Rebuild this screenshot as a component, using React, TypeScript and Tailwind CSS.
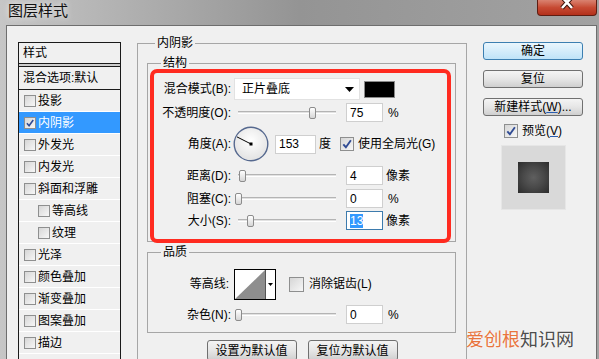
import React from 'react';

type BoxProps = { checked?: boolean; className?: string };

function CheckBox({ checked = false, className = 'h-[12px] w-[12px]' }: BoxProps) {
  return (
    <span
      className={`flex shrink-0 items-center justify-center border border-[#8e8f8f] bg-gradient-to-br from-[#d6d6d6] to-[#f7f7f7] ${className}`}
    >
      {checked && (
        <svg viewBox="0 0 12 12" className="h-full w-full">
          <path d="M2.3 6.3 L4.9 9.2 L9.9 2.3" fill="none" stroke="#304b94" strokeWidth="1.9" />
        </svg>
      )}
    </span>
  );
}

function Slider({ pos }: { pos: number }) {
  return (
    <div className="relative h-[14px] w-[106px] shrink-0">
      <div className="absolute left-[4px] right-[4px] top-[5px] h-[3px] border-t border-b border-t-[#b4b4b4] border-b-white bg-[#e2e2e2]" />
      <div
        className="absolute top-[1px] h-[12px] w-[7px] rounded-[2px] border border-[#8c8c8c] bg-gradient-to-b from-white to-[#d6d6d6]"
        style={{ left: pos }}
      />
    </div>
  );
}

function NumBox({ value, focused = false, className = 'w-[37px]' }: { value: string; focused?: boolean; className?: string }) {
  return (
    <div
      className={`flex h-[19px] shrink-0 items-center border bg-white pl-[3px] leading-[14px] ${className} ${
        focused ? 'border-[#3d7bad]' : 'border-[#cfcfcf]'
      }`}
    >
      {focused ? <span className="bg-[#3399ff] text-white">{value}</span> : value}
    </div>
  );
}

function Button({ children, primary = false, className = '' }: { children: React.ReactNode; primary?: boolean; className?: string }) {
  return (
    <div
      className={`flex items-center justify-center rounded-[3px] border leading-[14px] ${className} ${
        primary
          ? 'border-[#3c7fb1] bg-gradient-to-b from-[#eaf6fd] to-[#bfe3f8]'
          : 'border-[#707070] bg-gradient-to-b from-[#f4f4f4] via-[#e6e6e6] to-[#cfcfcf]'
      }`}
    >
      {children}
    </div>
  );
}

const styleItems = [
  { label: '投影' },
  { label: '内阴影', checked: true, active: true },
  { label: '外发光' },
  { label: '内发光' },
  { label: '斜面和浮雕' },
  { label: '等高线', sub: true },
  { label: '纹理', sub: true },
  { label: '光泽' },
  { label: '颜色叠加' },
  { label: '渐变叠加' },
  { label: '图案叠加' },
  { label: '描边' },
];

export default function App() {
  return (
    <div className="relative h-[359px] w-[599px] overflow-hidden bg-gradient-to-r from-[#c6c6c6] via-[#949494] to-[#a2a2a2] font-['Liberation_Sans','Noto_Sans_CJK_SC',sans-serif] text-[12px] text-black">
      {/* Title bar */}
      <div className="flex h-[25px] items-start justify-between">
        <span className="pl-[8px] pt-[1px] text-[15px] leading-[20px] text-[#111] [text-shadow:0_0_6px_#ffffff]">
          图层样式
        </span>
        <div className="mr-[2px] flex h-[16px] w-[60px] justify-center rounded-b-[4px] border border-t-0 border-[#5e1d12] bg-gradient-to-b from-[#d98270] via-[#c74a33] to-[#b3301b]">
          <svg width="16" height="11" viewBox="0 0 16 11">
            <path d="M3 -3 L13 8 M13 -3 L3 8" stroke="#3a120a" strokeWidth="4.5" />
            <path d="M3 -3 L13 8 M13 -3 L3 8" stroke="#ffffff" strokeWidth="2.6" />
          </svg>
        </div>
      </div>

      {/* Dialog body */}
      <div className="ml-[6px] flex h-[334px] w-[591px] items-start overflow-hidden border-x border-t border-[#6e6e6e] bg-[#f0f0f0] pl-[11px]">
        {/* Styles list */}
        <div className="mt-[16px] h-[400px] w-[103px] shrink-0 border border-[#1a1a1a]">
          <div className="flex h-[21px] items-center border-b border-[#1a1a1a] pl-[4px]">样式</div>
          <div className="h-[3px] border-b border-[#1a1a1a] bg-[#cdcdcd]" />
          <div className="flex h-[23px] items-center border-b border-[#1a1a1a] pl-[4px]">混合选项:默认</div>
          {styleItems.map((item) => (
            <div
              key={item.label}
              className={`flex h-[22px] items-center gap-[2px] border-b border-white ${
                item.sub ? 'pl-[19px]' : 'pl-[5px]'
              } ${item.active ? 'bg-[#3399ff] text-white' : ''}`}
            >
              <CheckBox checked={item.checked} />
              <span>{item.label}</span>
            </div>
          ))}
          <div className="h-[22px]" />
        </div>

        {/* Inner shadow group */}
        <fieldset className="ml-[16px] mt-[10px] w-[330px] shrink-0 border border-[#a6a6a6] pb-[10px]">
          <legend className="ml-[17px] px-[2px] leading-[14px]">内阴影</legend>

          {/* Structure */}
          <fieldset className="ml-[9px] mt-[6px] w-[309px] border border-[#a6a6a6]">
            <legend className="ml-[13px] px-[2px] leading-[14px]">结构</legend>
            <div className="-mb-[2px] -mt-px ml-[2px] flex h-[174px] w-[301px] flex-col rounded-[7px] border-4 border-[#ff2b20]">
              <div className="mt-[5px] flex h-[22px] items-center">
                <span className="w-[77px] text-right">混合模式(B):</span>
                <div className="ml-[3px] flex h-[22px] w-[126px] items-center justify-between border border-[#e2e2e2] bg-white pl-[7px] pr-[5px]">
                  <span>正片叠底</span>
                  <svg width="9" height="5" viewBox="0 0 9 5">
                    <path d="M0 0 H9 L4.5 5 Z" fill="#000" />
                  </svg>
                </div>
                <div className="ml-[4px] h-[17px] w-[31px] border border-[#8a8a8a] bg-black" />
              </div>

              <div className="mt-[3px] flex h-[19px] items-center">
                <span className="w-[77px] text-right">不透明度(O):</span>
                <div className="ml-[3px]">
                  <Slider pos={75} />
                </div>
                <NumBox value="75" className="ml-[6px] w-[37px]" />
                <span className="ml-[5px]">%</span>
              </div>

              <div className="mt-[4px] flex h-[36px] items-center">
                <span className="w-[77px] text-right">角度(A):</span>
                <svg width="36" height="36" viewBox="0 0 36 36" className="ml-[2px] shrink-0">
                  <defs>
                    <radialGradient id="dial" cx="50%" cy="40%" r="60%">
                      <stop offset="0" stopColor="#ffffff" />
                      <stop offset="1" stopColor="#e2e2e2" />
                    </radialGradient>
                  </defs>
                  <circle cx="18" cy="18" r="16.8" fill="url(#dial)" stroke="#56698f" strokeWidth="1.4" />
                  <line x1="18" y1="18" x2="4" y2="10.9" stroke="#000" strokeWidth="1" />
                  <rect x="16.5" y="16.5" width="3" height="3" fill="#000" />
                </svg>
                <NumBox value="153" className="ml-[6px] w-[41px]" />
                <span className="ml-[3px]">度</span>
                <CheckBox checked className="ml-[9px] h-[14px] w-[14px]" />
                <span className="ml-[4px]">使用全局光(G)</span>
              </div>

              <div className="mt-[4px] flex h-[19px] items-center">
                <span className="w-[77px] text-right">距离(D):</span>
                <div className="ml-[3px]">
                  <Slider pos={5} />
                </div>
                <NumBox value="4" className="ml-[6px] w-[37px]" />
                <span className="ml-[3px]">像素</span>
              </div>

              <div className="mt-[4px] flex h-[19px] items-center">
                <span className="w-[77px] text-right">阻塞(C):</span>
                <div className="ml-[3px]">
                  <Slider pos={1} />
                </div>
                <NumBox value="0" className="ml-[6px] w-[37px]" />
                <span className="ml-[5px]">%</span>
              </div>

              <div className="mt-[3px] flex h-[19px] items-center">
                <span className="w-[77px] text-right">大小(S):</span>
                <div className="ml-[3px]">
                  <Slider pos={13} />
                </div>
                <NumBox value="13" focused className="ml-[6px] w-[37px]" />
                <span className="ml-[3px]">像素</span>
              </div>
            </div>
          </fieldset>

          {/* Quality */}
          <fieldset className="ml-[9px] mt-[3px] w-[309px] border border-[#a6a6a6] pb-[8px]">
            <legend className="ml-[13px] px-[2px] leading-[14px]">品质</legend>
            <div className="mt-[10px] flex h-[30px] items-center">
              <span className="w-[81px] text-right">等高线:</span>
              <div className="ml-[5px] flex h-[31px] w-[42px] border border-black bg-white">
                <svg width="30" height="29" viewBox="0 0 30 29" className="shrink-0">
                  <path d="M0 29 L30 0 V29 Z" fill="#8e8e8e" />
                </svg>
                <div className="flex flex-1 items-center justify-center border-l border-[#555]">
                  <svg width="5" height="3" viewBox="0 0 5 3">
                    <path d="M0 0 H5 L2.5 3 Z" fill="#000" />
                  </svg>
                </div>
              </div>
              <CheckBox className="ml-[13px] h-[15px] w-[15px]" />
              <span className="ml-[5px]">消除锯齿(L)</span>
            </div>
            <div className="mt-[6px] flex h-[19px] items-center">
              <span className="w-[83px] text-right">杂色(N):</span>
              <div className="ml-[3px]">
                <Slider pos={1} />
              </div>
              <NumBox value="0" className="ml-[6px] w-[37px]" />
              <span className="ml-[5px]">%</span>
            </div>
          </fieldset>

          <div className="mt-[7px] flex justify-center gap-[11px]">
            <Button className="h-[21px] w-[90px]">设置为默认值</Button>
            <Button className="h-[21px] w-[90px]">复位为默认值</Button>
          </div>
        </fieldset>

        {/* Right column */}
        <div className="ml-[16px] mt-[16px] flex w-[100px] shrink-0 flex-col">
          <Button primary className="h-[18px]">确定</Button>
          <Button className="mt-[10px] h-[18px]">复位</Button>
          <Button className="mt-[10px] h-[18px]">
            新建样式(<span className="underline decoration-[#2a5db0]">W</span>)...
          </Button>
          <div className="mt-[8px] flex h-[14px] items-center justify-center gap-[4px]">
            <CheckBox checked className="h-[14px] w-[14px]" />
            <span>
              预览(<span className="underline decoration-[#2a5db0]">V</span>)
            </span>
          </div>
          <div className="mx-auto mt-[7px] flex h-[65px] w-[65px] items-center justify-center border border-[#e6e6e6] bg-[#d9d9d9]">
            <div className="h-[31px] w-[31px] bg-[radial-gradient(circle,#5f5f5f_0%,#4a4a4a_45%,#2c2c2c_100%)]" />
          </div>
        </div>
      </div>

      {/* Watermark */}
      <div className="absolute left-[466px] top-[329px] text-[18px] leading-[22px] [text-shadow:0_0_2px_#ffffff]">
        <span className="text-[#e8743d]">爱创根</span>
        <span className="text-[#4d4d4d]">知识网</span>
      </div>
    </div>
  );
}
